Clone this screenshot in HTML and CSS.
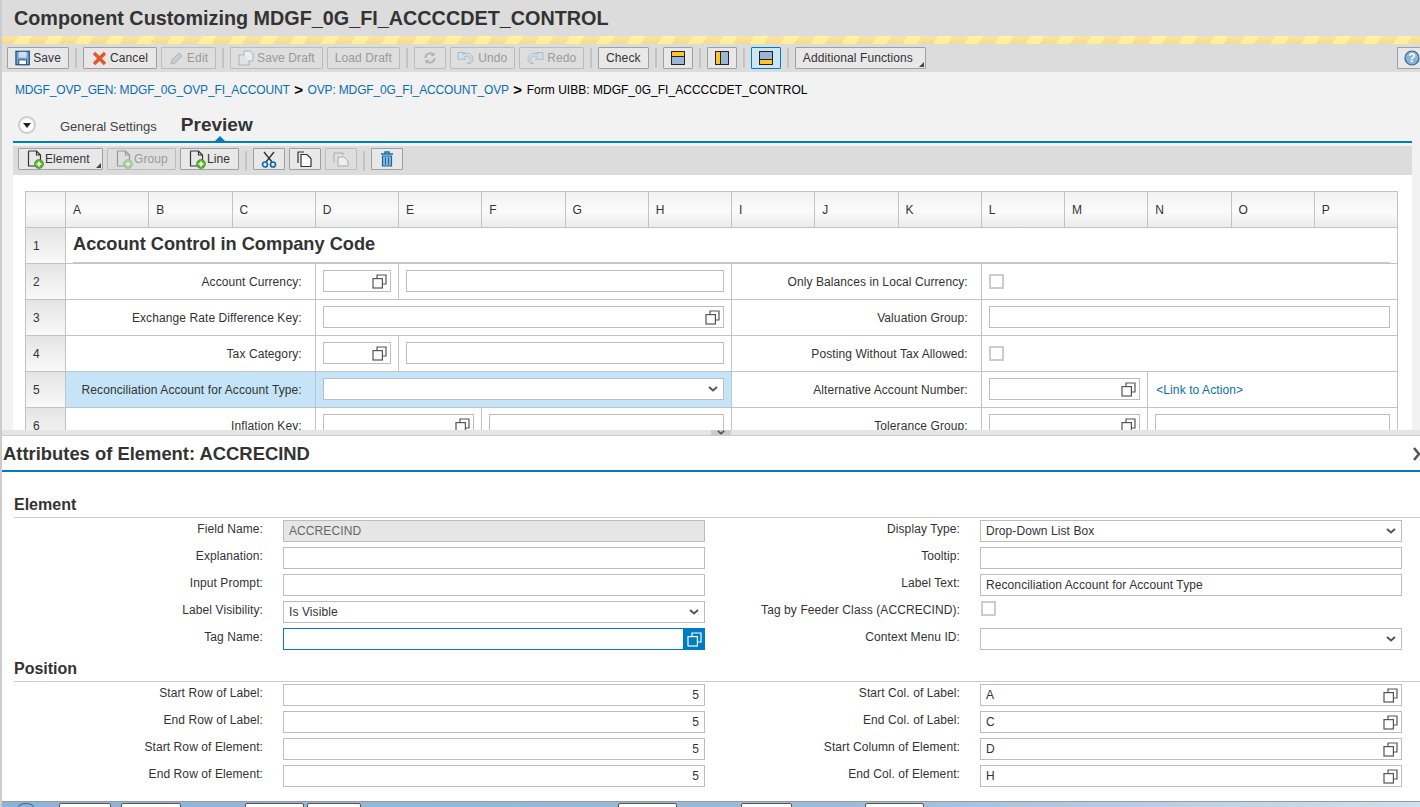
FILE: index.html
```html
<!DOCTYPE html>
<html lang="en">
	<head>
		<meta charset="UTF-8" />
		<title>Component Customizing MDGF_0G_FI_ACCCCDET_CONTROL</title>
		<link rel="stylesheet" href="styles.css">
	</head>
	<body>
		<svg class="defs">
			<symbol id="vh" viewBox="0 0 15 15">
				<path d="M5 4V1h9v9h-3" fill="none" stroke="#555" stroke-width="1.2"/>
				<rect x="1" y="4.6" width="9.4" height="9.4" fill="none" stroke="#555" stroke-width="1.2"/>
			</symbol>
			<symbol id="vh-white" viewBox="0 0 15 15">
				<path d="M5 4V1h9v9h-3" fill="none" stroke="#fff" stroke-width="1.2"/>
				<rect x="1" y="4.6" width="9.4" height="9.4" fill="none" stroke="#fff" stroke-width="1.2"/>
			</symbol>
			<symbol id="chev" viewBox="0 0 10 6">
				<path d="M1 1l4 3.5L9 1" fill="none" stroke="#555" stroke-width="2"/>
			</symbol>
			<symbol id="doc-add" viewBox="0 0 18 19">
				<path d="M2.5 1h8l4 4v7M10.500 1v4h4M2.500 1v15h7" fill="none" stroke="#333" stroke-width="1.2"/>
				<circle cx="13" cy="14" r="4.500" fill="#5cb531" stroke="#2f7d18" stroke-width=".6"/>
				<path d="M13 11.500v5M10.500 14h5" stroke="#fff" stroke-width="1.500"/>
			</symbol>
			<symbol id="undo" viewBox="0 0 18 14">
				<path d="M1 1.500h6.500l-2 2c1.500-.8 3-1.200 4.500-1.200 3.500 0 6 2.700 6 5.700 0 2-1 3.500-2.500 4.500h-3c2-1 3-2.500 3-4.200 0-2-1.500-3.300-3.500-3.300-1.300 0-2.500.5-3.300 1.300l2 2H1z" fill="#d3dfe8" stroke="#a9bccb"/>
			</symbol>
		</svg>

		<header class="page-title">Component Customizing MDGF_0G_FI_ACCCCDET_CONTROL</header>
		<div class="stripes"></div>

		<div class="toolbar">
			<button class="btn btn-save">
				<svg width="16" height="16" viewBox="0 0 16 16"><rect x="1" y="1" width="14" height="14" fill="#7ba7d0" stroke="#1f4f7c" stroke-width="1.300"/><rect x="4" y="1.500" width="8" height="6" fill="#cfe0f0"/><rect x="4" y="10" width="8" height="5" fill="#fff" stroke="#1f4f7c"/></svg>
				Save
			</button>
			<span class="sep"></span>
			<button class="btn btn-cancel">
				<svg width="15" height="15" viewBox="0 0 15 15"><path d="M2 2l11 11M13 2L2 13" stroke="#e2562a" stroke-width="3.400"/></svg>
				Cancel
			</button>
			<button class="btn off">
				<svg width="15" height="15" viewBox="0 0 15 15"><path d="M2 13l1-4 7-7 3 3-7 7z" fill="#c3d0da" stroke="#a9b4bc"/></svg>
				Edit
			</button>
			<span class="sep"></span>
			<button class="btn off">
				<svg width="16" height="16" viewBox="0 0 16 16"><rect x="1" y="5" width="10" height="10" fill="#dde3e8" stroke="#aab3ba"/><path d="M6 5V1h6l3 3v7h-4" fill="#ececec" stroke="#aab3ba"/></svg>
				Save Draft
			</button>
			<button class="btn off">Load Draft</button>
			<span class="sep"></span>
			<button class="btn off btn-icon">
				<svg width="14" height="14" viewBox="0 0 14 14"><path d="M2.500 7a4.500 4.500 0 0 1 8-3M11.500 7a4.500 4.500 0 0 1-8 3" fill="none" stroke="#a9b4bc" stroke-width="1.800"/><path d="M11.500 1v4h-4zM2.500 13V9h4z" fill="#a9b4bc"/></svg>
			</button>
			<button class="btn off btn-history">
				<svg width="18" height="14"><use href="#undo"/></svg>
				Undo
			</button>
			<button class="btn off btn-history">
				<svg class="flip" width="18" height="14"><use href="#undo"/></svg>
				Redo
			</button>
			<span class="sep"></span>
			<button class="btn btn-check">Check</button>
			<span class="sep"></span>
			<button class="btn btn-layout">
				<svg width="14" height="14" viewBox="0 0 14 14"><rect x=".5" y=".5" width="13" height="13" fill="#9ab5d5" stroke="#222"/><rect x="1" y="1" width="12" height="4" fill="#fdc42d"/><path d="M1 5.500h12" stroke="#222"/></svg>
			</button>
			<span class="sep"></span>
			<button class="btn btn-layout">
				<svg width="14" height="14" viewBox="0 0 14 14"><rect x=".5" y=".5" width="13" height="13" fill="#9ab5d5" stroke="#222"/><rect x="1" y="1" width="4" height="12" fill="#fdc42d"/><path d="M5.500 1v12" stroke="#222"/></svg>
			</button>
			<span class="sep"></span>
			<button class="btn btn-layout on">
				<svg width="14" height="14" viewBox="0 0 14 14"><rect x=".5" y=".5" width="13" height="13" fill="#9ab5d5" stroke="#222"/><rect x="1" y="9" width="12" height="4" fill="#fdc42d"/><path d="M1 8.500h12" stroke="#222"/></svg>
			</button>
			<span class="sep"></span>
			<button class="btn btn-menu btn-more">Additional Functions</button>
			<button class="btn btn-help">
				<svg width="16" height="16" viewBox="0 0 16 16"><circle cx="8" cy="8" r="7" fill="#8db2d6" stroke="#2a6c9c" stroke-width="1.200"/><text x="8" y="12" text-anchor="middle" class="help-mark">?</text></svg>
			</button>
		</div>

		<main class="top-pane">
			<nav class="crumbs">
				<a>MDGF_OVP_GEN: MDGF_0G_OVP_FI_ACCOUNT</a>
				<b>&gt;</b>
				<a>OVP: MDGF_0G_FI_ACCOUNT_OVP</a>
				<b>&gt;</b>
				<span>Form UIBB: MDGF_0G_FI_ACCCCDET_CONTROL</span>
			</nav>

			<div class="tabs">
				<span class="tab-menu"><i></i></span>
				<span class="tab">General Settings</span>
				<span class="tab active">Preview</span>
			</div>

			<div class="subbar">
				<button class="btn btn-tool btn-menu btn-element"><svg width="18" height="19"><use href="#doc-add"/></svg>Element</button>
				<button class="btn btn-tool btn-group off"><svg class="faded" width="18" height="19"><use href="#doc-add"/></svg>Group</button>
				<button class="btn btn-tool btn-line"><svg width="18" height="19"><use href="#doc-add"/></svg>Line</button>
				<span class="sep"></span>
				<button class="btn btn-tool btn-icon">
					<svg width="16" height="17" viewBox="0 0 16 17"><path d="M3 1l8 10M13 1L5 11" stroke="#333" stroke-width="1.400"/><circle cx="4" cy="13.500" r="2.500" fill="none" stroke="#0f6ea8" stroke-width="1.700"/><circle cx="12" cy="13.500" r="2.500" fill="none" stroke="#0f6ea8" stroke-width="1.700"/></svg>
				</button>
				<button class="btn btn-tool btn-icon">
					<svg width="16" height="16" viewBox="0 0 16 16"><path d="M1 12V1h6" fill="none" stroke="#333" stroke-width="1.200"/><path d="M4 3.500h6l4 4v8H4z" fill="#fff" stroke="#333" stroke-width="1.200"/></svg>
				</button>
				<button class="btn btn-tool btn-icon off">
					<svg width="16" height="16" viewBox="0 0 16 16"><path d="M1 12V2h9v2" fill="#e0e0e0" stroke="#aaa"/><path d="M5 6h6l4 4v5H5z" fill="#eee" stroke="#aaa"/></svg>
				</button>
				<span class="sep"></span>
				<button class="btn btn-tool btn-icon">
					<svg width="14" height="16" viewBox="0 0 14 16"><path d="M1 3h12M5 3V1h4v2" fill="none" stroke="#0f6ea8" stroke-width="1.400"/><path d="M2.500 5h9v10h-9z" fill="#8db2d6" stroke="#0f6ea8" stroke-width="1.200"/><path d="M5.500 6.500v7M8.500 6.500v7" stroke="#0f6ea8"/></svg>
				</button>
			</div>

			<div class="canvas">
				<div class="sheet">
					<div class="corner"></div>
					<div class="col">A</div><div class="col">B</div><div class="col">C</div><div class="col">D</div>
					<div class="col">E</div><div class="col">F</div><div class="col">G</div><div class="col">H</div>
					<div class="col">I</div><div class="col">J</div><div class="col">K</div><div class="col">L</div>
					<div class="col">M</div><div class="col">N</div><div class="col">O</div><div class="col">P</div>

					<div class="num">1</div>
					<div class="cell span-16 sheet-heading"><h2>Account Control in Company Code</h2></div>

					<div class="num">2</div>
					<div class="cell span-3 lbl">Account Currency:</div>
					<div class="cell span-1"><div class="field"><svg class="vh-icon"><use href="#vh"/></svg></div></div>
					<div class="cell span-4"><div class="field"></div></div>
					<div class="cell span-3 lbl">Only Balances in Local Currency:</div>
					<div class="cell span-5"><span class="check"></span></div>

					<div class="num">3</div>
					<div class="cell span-3 lbl">Exchange Rate Difference Key:</div>
					<div class="cell span-5"><div class="field"><svg class="vh-icon"><use href="#vh"/></svg></div></div>
					<div class="cell span-3 lbl">Valuation Group:</div>
					<div class="cell span-5"><div class="field"></div></div>

					<div class="num">4</div>
					<div class="cell span-3 lbl">Tax Category:</div>
					<div class="cell span-1"><div class="field"><svg class="vh-icon"><use href="#vh"/></svg></div></div>
					<div class="cell span-4"><div class="field"></div></div>
					<div class="cell span-3 lbl">Posting Without Tax Allowed:</div>
					<div class="cell span-5"><span class="check"></span></div>

					<div class="num">5</div>
					<div class="cell span-3 lbl picked">Reconciliation Account for Account Type:</div>
					<div class="cell span-5 picked"><div class="field"><svg class="chev-icon"><use href="#chev"/></svg></div></div>
					<div class="cell span-3 lbl">Alternative Account Number:</div>
					<div class="cell span-2"><div class="field"><svg class="vh-icon"><use href="#vh"/></svg></div></div>
					<div class="cell span-3"><a class="action">&lt;Link to Action&gt;</a></div>

					<div class="num">6</div>
					<div class="cell span-3 lbl">Inflation Key:</div>
					<div class="cell span-2"><div class="field"><svg class="vh-icon"><use href="#vh"/></svg></div></div>
					<div class="cell span-3"><div class="field"></div></div>
					<div class="cell span-3 lbl">Tolerance Group:</div>
					<div class="cell span-2"><div class="field"><svg class="vh-icon"><use href="#vh"/></svg></div></div>
					<div class="cell span-3"><div class="field"></div></div>
				</div>
			</div>
		</main>

		<div class="sash"><span class="grip"><svg width="8" height="5"><use href="#chev"/></svg></span></div>

		<section class="attrs">
			<div class="attrs-head">
				<h2>Attributes of Element: ACCRECIND</h2>
				<svg class="attrs-close" width="10" height="14" viewBox="0 0 10 14"><path d="M2 1l5 6-5 6" fill="none" stroke="#555" stroke-width="2.600"/></svg>
			</div>

			<h3>Element</h3>
			<div class="form">
				<label>Field Name:</label>
				<div class="field read-only">ACCRECIND</div>
				<label>Display Type:</label>
				<div class="field">Drop-Down List Box<svg class="chev-icon"><use href="#chev"/></svg></div>

				<label>Explanation:</label>
				<div class="field"></div>
				<label>Tooltip:</label>
				<div class="field"></div>

				<label>Input Prompt:</label>
				<div class="field"></div>
				<label>Label Text:</label>
				<div class="field">Reconciliation Account for Account Type</div>

				<label>Label Visibility:</label>
				<div class="field">Is Visible<svg class="chev-icon"><use href="#chev"/></svg></div>
				<label>Tag by Feeder Class (ACCRECIND):</label>
				<div class="check-wrap"><span class="check"></span></div>

				<label>Tag Name:</label>
				<div class="field focus"><span class="vh-btn"><svg width="15" height="15"><use href="#vh-white"/></svg></span></div>
				<label>Context Menu ID:</label>
				<div class="field"><svg class="chev-icon"><use href="#chev"/></svg></div>
			</div>

			<h3 class="second">Position</h3>
			<div class="form">
				<label>Start Row of Label:</label>
				<div class="field num-field">5</div>
				<label>Start Col. of Label:</label>
				<div class="field">A<svg class="vh-icon"><use href="#vh"/></svg></div>

				<label>End Row of Label:</label>
				<div class="field num-field">5</div>
				<label>End Col. of Label:</label>
				<div class="field">C<svg class="vh-icon"><use href="#vh"/></svg></div>

				<label>Start Row of Element:</label>
				<div class="field num-field">5</div>
				<label>Start Column of Element:</label>
				<div class="field">D<svg class="vh-icon"><use href="#vh"/></svg></div>

				<label>End Row of Element:</label>
				<div class="field num-field">5</div>
				<label>End Col. of Element:</label>
				<div class="field">H<svg class="vh-icon"><use href="#vh"/></svg></div>
			</div>
		</section>

		<footer class="taskbar">
			<span class="orb"></span>
			<span class="task task-1"></span>
			<span class="task task-2"></span>
			<span class="task task-3"></span>
			<span class="task task-4"></span>
			<span class="task task-5"></span>
			<span class="task task-6"></span>
			<span class="task task-7"></span>
		</footer>
	</body>
</html>
```

FILE: styles.css
```css
html {
	background: #fff;
	color: #333;
	font-family: "Liberation Sans", Arial, sans-serif;
	font-size: 12px;
	letter-spacing: 0.09px;
}
body {
	margin: 0;
	width: 1420px;
	height: 807px;
	overflow: hidden;
	display: flex;
	flex-direction: column;
	border-left: 2px solid #ccc;
	box-sizing: border-box;
}
.defs {
	display: none;
}

/* title + stripes */
.page-title {
	height: 36px;
	line-height: 36px;
	padding-left: 12px;
	background: #dcdcdc;
	font-size: 19.8px;
	font-weight: bold;
	letter-spacing: 0;
}
.stripes {
	height: 8px;
	background:
		linear-gradient(rgba(255, 255, 255, 0.25), rgba(255, 255, 255, 0)),
		repeating-linear-gradient(122deg, #f7da8c 0, #f7da8c 14px, #ffef8e 14px, #ffef8e 26px);
}

/* toolbars */
.toolbar {
	height: 28px;
	padding: 3px 0 3px 5px;
	box-sizing: border-box;
	background: #dcdcdc;
	display: flex;
	align-items: flex-start;
	gap: 4px;
}
.btn {
	height: 22px;
	padding: 0 7px;
	display: flex;
	align-items: center;
	justify-content: center;
	gap: 3px;
	box-sizing: border-box;
	border: 1px solid #a0a0a0;
	border-radius: 1px;
	background: #e8e8e8;
	font: 12px "Liberation Sans", Arial, sans-serif;
	letter-spacing: 0.1px;
	color: #333;
	white-space: nowrap;
}
.btn.off {
	border-color: #bcbcbc;
	background: #dedede;
	color: #9a9a9a;
}
.btn-save {
	width: 62px;
}
.btn-cancel {
	width: 74px;
}
.btn-history {
	width: 65px;
	padding: 0;
}
.flip {
	transform: scaleX(-1);
}
.btn-check {
	width: 51px;
	padding: 0;
}
.btn-icon {
	width: 32px;
	padding: 0;
}
.btn-layout {
	width: 30px;
	padding: 0;
}
.btn-layout.on {
	background: #cde6f5;
	border-color: #007cc0;
}
.btn-menu {
	position: relative;
}
.btn-menu::after {
	content: "";
	position: absolute;
	right: 1px;
	bottom: 1px;
	border-left: 5px solid transparent;
	border-bottom: 5px solid #444;
}
.btn-more {
	width: 131px;
	justify-content: flex-start;
}
.btn-help {
	margin-left: auto;
	width: 23px;
	padding: 0 0 0 6px;
	justify-content: flex-start;
	border-right: none;
}
.help-mark {
	fill: #fff;
	font-size: 12px;
	font-weight: bold;
}
.sep {
	width: 2px;
	height: 20px;
	margin: 1px 2px 0;
	background: #c4c4c4;
}

/* top pane */
.top-pane {
	height: 358px;
	overflow: hidden;
	background: #f2f2f2;
}
.crumbs {
	height: 37px;
	padding: 11px 0 0 13px;
	box-sizing: border-box;
	display: flex;
	align-items: flex-start;
	gap: 4.5px;
	line-height: 15px;
	color: #000;
}
.crumbs a {
	color: #0a6fb0;
	letter-spacing: -0.15px;
}
.crumbs b {
	font-size: 15px;
	line-height: 14px;
}
.crumbs span {
	letter-spacing: 0.02px;
}
.tabs {
	height: 34px;
	margin-left: 11px;
	margin-right: 8px;
	padding-left: 5px;
	box-sizing: border-box;
	display: flex;
	align-items: flex-end;
	border-bottom: 2px solid #007cc0;
}
.tab-menu {
	width: 14px;
	height: 14px;
	margin-bottom: 7px;
	border: 2px solid #ccc;
	border-radius: 50%;
	background: #fff;
	display: flex;
	align-items: center;
	justify-content: center;
}
.tab-menu i {
	border: 4px solid transparent;
	border-top: 5px solid #222;
	border-bottom: none;
}
.tab {
	margin-left: 24px;
	padding-bottom: 7px;
	font-size: 13px;
	letter-spacing: 0;
	color: #444;
}
.tab.active {
	position: relative;
	font-size: 19px;
	font-weight: bold;
	padding-bottom: 5px;
	color: #333;
}
.tab.active::after {
	content: "";
	position: absolute;
	left: 34px;
	bottom: 0;
	border: 5px solid transparent;
	border-top: none;
	border-bottom: 5px solid #007cc0;
}
.subbar {
	height: 29px;
	margin: 3px 8px 0 11px;
	padding: 2px 0 0 5px;
	box-sizing: border-box;
	background: #dcdcdc;
	display: flex;
	align-items: flex-start;
	gap: 4px;
}
.subbar .sep {
	margin-top: 3px;
}
.btn-tool {
	justify-content: flex-start;
	padding: 0 0 0 7px;
	gap: 1px;
}
.btn-tool.btn-icon {
	justify-content: center;
	padding: 0;
}
.btn-element {
	width: 85px;
}
.btn-group {
	width: 69px;
}
.btn-line {
	width: 59px;
}
.faded {
	opacity: 0.4;
}
.canvas {
	margin: 0 8px 0 11px;
	padding: 16px 14px 0 12px;
	background: #fff;
	height: 300px;
}

/* sheet grid */
.sheet {
	display: grid;
	grid-template-columns: 40px repeat(16, 1fr);
	grid-auto-rows: 36px;
	border-top: 1px solid #c0c4c8;
	border-left: 1px solid #c0c4c8;
}
.corner,
.col,
.num,
.cell {
	box-sizing: border-box;
	border-right: 1px solid #c0c4c8;
	border-bottom: 1px solid #c0c4c8;
	display: flex;
	align-items: center;
}
.corner,
.col {
	background: linear-gradient(#f1f1f1, #fbfbfb 55%, #ececec);
}
.col {
	padding-left: 7px;
}
.num {
	padding-left: 7px;
	background: linear-gradient(#e4e4e4, #f9f9f9);
}
.cell {
	padding: 0 7px;
	min-width: 0;
}
.cell .field {
	margin-bottom: 1px;
}
.span-1 { grid-column: span 1; }
.span-2 { grid-column: span 2; }
.span-3 { grid-column: span 3; }
.span-4 { grid-column: span 4; }
.span-5 { grid-column: span 5; }
.span-16 { grid-column: span 16; }
.sheet-heading h2 {
	flex: 1;
	margin: 0;
	height: 34px;
	line-height: 32px;
	font-size: 18.2px;
	letter-spacing: 0;
	border-bottom: 1px solid #c8c8c8;
}
.lbl {
	justify-content: flex-end;
	padding-right: 13px;
	white-space: nowrap;
}
.picked {
	background: #c5e4f7;
}
.action {
	padding-left: 1px;
	color: #0a6fb0;
}

/* inputs */
.field {
	position: relative;
	flex: 1;
	height: 22px;
	line-height: 20px;
	padding: 0 5px;
	box-sizing: border-box;
	border: 1px solid #bdbdbd;
	background: #fff;
	white-space: nowrap;
}
.read-only {
	background: #e6e6e6;
	color: #666;
}
.num-field {
	text-align: right;
}
.focus {
	border-color: #007cc0;
}
.vh-btn {
	position: absolute;
	top: -1px;
	right: -1px;
	width: 22px;
	height: 22px;
	background: #007cc0;
	display: flex;
	align-items: center;
	justify-content: center;
}
.vh-icon {
	position: absolute;
	right: 3px;
	top: 3px;
	width: 15px;
	height: 15px;
}
.chev-icon {
	position: absolute;
	right: 5px;
	top: 7px;
	width: 10px;
	height: 6px;
}
.check {
	display: block;
	width: 15px;
	height: 15px;
	box-sizing: border-box;
	border: 2px solid #ccc;
	background: #fff;
}

/* sash */
.sash {
	height: 6px;
	background: #e5e5e5;
	border-bottom: 1px solid #ccc;
	box-sizing: border-box;
	display: flex;
	justify-content: center;
}
.grip {
	width: 20px;
	margin-left: 20px;
	height: 5px;
	background: #ccc;
	display: flex;
	justify-content: center;
}

/* attributes panel */
.attrs {
	flex: 1;
	min-height: 0;
	background: #fff;
}
.attrs-head {
	height: 36px;
	padding-top: 1px;
	box-sizing: border-box;
	display: flex;
	align-items: center;
	justify-content: space-between;
	padding-left: 1px;
	border-bottom: 2px solid #007cc0;
	margin-bottom: 26px;
}
.attrs-head h2 {
	margin: 0;
	font-size: 18.4px;
	letter-spacing: 0;
}
.attrs-close {
	margin-right: -2px;
}
.attrs h3 {
	height: 19px;
	margin: 0 0 2px 12px;
	line-height: 13px;
	font-size: 16px;
	letter-spacing: 0;
	border-bottom: 1px solid #ccc;
}
.attrs h3.second {
	margin-top: 12px;
}
.form {
	display: grid;
	grid-template-columns: 281px 422px 275px 422px;
	grid-auto-rows: 22px;
	row-gap: 5px;
}
.form label {
	padding-right: 20px;
	text-align: right;
	line-height: 18px;
	white-space: nowrap;
}
.check-wrap {
	padding-left: 1px;
}

/* bottom strip */
.taskbar {
	height: 5px;
	margin-left: -2px;
	border-top: 1px solid #999;
	background: linear-gradient(90deg, #8fb2d6, #9dbbd9 60%, #cfe0ef);
	position: relative;
}
.orb {
	position: absolute;
	left: 18px;
	top: 1px;
	width: 16px;
	height: 8px;
	box-sizing: border-box;
	border: 1px solid #2f6d9e;
	border-radius: 50%;
}
.task {
	position: absolute;
	top: 1px;
	height: 5px;
	background: #fff;
	border: 1px solid #555;
	border-radius: 2px 2px 0 0;
	box-sizing: border-box;
}
.task-1 { left: 59px; width: 52px; }
.task-2 { left: 121px; width: 60px; }
.task-3 { left: 245px; width: 59px; }
.task-4 { left: 307px; width: 54px; }
.task-5 { left: 618px; width: 59px; }
.task-6 { left: 741px; width: 51px; }
.task-7 { left: 865px; width: 59px; }
```
